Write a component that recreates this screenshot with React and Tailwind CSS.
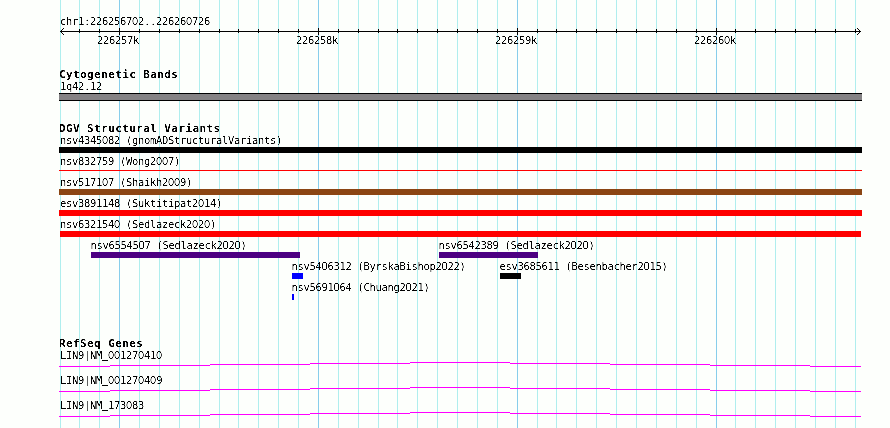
import React from "react";

const minorLines = [
  60, 79, 99, 139, 159, 179, 199, 219, 238, 258, 278, 298, 338, 358, 378, 397,
  417, 437, 457, 477, 497, 537, 556, 576, 596, 616, 636, 656, 676, 696, 735,
  755, 775, 795, 815, 835, 855,
];

const majorLines = [119, 318, 517, 716];

const scaleLabels = ["226257k", "226258k", "226259k", "226260k"];

const variants = [
  { name: "nsv4345082 (gnomADStructuralVariants)", color: "bg-black" },
  { name: "nsv832759 (Wong2007)", color: "bg-[#ff0000]", thin: true },
  { name: "nsv517107 (Shaikh2009)", color: "bg-[#8b4513]" },
  { name: "esv3891148 (Suktitipat2014)", color: "bg-[#ff0000]" },
];

const genes = ["LIN9|NM_001270410", "LIN9|NM_001270409", "LIN9|NM_173083"];

const GridLines = () => (
  <svg
    className="absolute inset-0"
    width="890"
    height="428"
    shapeRendering="crispEdges"
  >
    {minorLines.map((x) => (
      <rect key={x} x={x} y="0" width="1" height="428" fill="#afeeee" />
    ))}
    {majorLines.map((x) => (
      <rect key={x} x={x} y="0" width="1" height="428" fill="#87ceeb" />
    ))}
  </svg>
);

const Ruler = () => (
  <svg
    className="block"
    width="890"
    height="9"
    viewBox="0 27 890 9"
    shapeRendering="crispEdges"
  >
    <rect x="60" y="31" width="801" height="1" />
    {minorLines.slice(1).map((x) => (
      <rect key={x} x={x} y="29" width="1" height="4" />
    ))}
    {majorLines.map((x) => (
      <rect key={x} x={x} y="28" width="1" height="7" />
    ))}
    {[1, 2, 3].map((d) => (
      <g key={d}>
        <rect x={60 + d} y={31 - d} width="1" height="1" />
        <rect x={60 + d} y={31 + d} width="1" height="1" />
        <rect x={860 - d} y={31 - d} width="1" height="1" />
        <rect x={860 - d} y={31 + d} width="1" height="1" />
      </g>
    ))}
  </svg>
);

// turns the antialiased glyphs into hard pixels
const CrispFilter = () => (
  <svg className="absolute" width="0" height="0">
    <filter id="crisp" x="0" y="-20%" width="100%" height="150%">
      <feComponentTransfer>
        <feFuncA type="linear" slope="3" intercept="-1.1" />
      </feComponentTransfer>
    </filter>
  </svg>
);

// the mono font has a dotted zero, so plain zeros come from the sans font
const Label = ({ children }) => (
  <p className="h-[15px] pl-px text-[10.5px] leading-[17px] tracking-[-0.321px] whitespace-pre [filter:url(#crisp)]">
    {children.split(/([0_])/).map((part, i) =>
      part === "0" || part === "_" ? (
        <span
          key={i}
          className="font-['Liberation_Sans',sans-serif] text-[11px] leading-none tracking-[-0.117px]"
        >
          {part}
        </span>
      ) : (
        part
      )
    )}
  </p>
);

const Heading = ({ children }) => (
  <h2 className="h-[13px] text-[11px] leading-[15px] font-bold tracking-[0.4px] whitespace-pre [filter:url(#crisp)]">
    {children}
  </h2>
);

const Feature = ({ name, className, bar }) => (
  <div className={className}>
    <div className="-ml-[0.5px]">
      <Label>{name}</Label>
    </div>
    <div className={`h-1.5 ml-px ${bar}`}></div>
  </div>
);

const Gene = ({ name }) => (
  <div className="h-[25px]">
    <Label>{name}</Label>
    <svg
      className="block"
      width="803"
      height="5"
      viewBox="59 0 803 5"
      shapeRendering="crispEdges"
      fill="#ff00ff"
    >
      <rect x="59" y="4" width="51" height="1" />
      <rect x="110" y="3" width="100" height="1" />
      <rect x="210" y="2" width="100" height="1" />
      <rect x="310" y="1" width="100" height="1" />
      <rect x="410" y="0" width="100" height="1" />
      <rect x="510" y="1" width="100" height="1" />
      <rect x="610" y="2" width="100" height="1" />
      <rect x="710" y="3" width="100" height="1" />
      <rect x="810" y="4" width="51" height="1" />
    </svg>
  </div>
);

const App = () => {
  return (
    <div className="relative w-[890px] h-[428px] overflow-hidden bg-[#fdfffc] text-black font-['DejaVu_Sans_Mono',monospace]">
      <CrispFilter />
      <GridLines />
      <div className="relative flex flex-col">
        <div className="h-[27px] pt-[13px] pl-[59px]">
          <Label>chr1:226256702..226260726</Label>
        </div>
        <Ruler />
        <div className="flex gap-[157px] h-[31px] pl-[96px] -mt-[4px]">
          {scaleLabels.map((label) => (
            <div key={label} className="w-[42px]">
              <Label>{label}</Label>
            </div>
          ))}
        </div>

        <div className="w-[803px] ml-[59px] pt-[4px]">
          <Heading>Cytogenetic Bands</Heading>
          <div className="-mt-[2px]">
            <Label>1q42.12</Label>
          </div>
          <div className="h-2 border-y border-black bg-[#848284]"></div>
        </div>

        <div className="w-[803px] ml-[59px] pt-[20px]">
          <Heading>DGV Structural Variants</Heading>
          <div className="-mt-[2px]">
            {variants.map((v) => (
              <div key={v.name} className="h-[21px]">
                <Label>{v.name}</Label>
                <div
                  className={`${v.thin ? "h-px mt-[2px]" : "h-1.5"} ${v.color}`}
                ></div>
              </div>
            ))}
            <div className="h-[21px]">
              <Label>nsv6321540 (Sedlazeck2020)</Label>
              <div className="h-1.5 mx-px bg-[#ff0000]"></div>
            </div>
            <div className="flex h-[21px] pl-[31px]">
              <Feature
                name="nsv6554507 (Sedlazeck2020)"
                className="w-[348px]"
                bar="w-[209px] bg-[#4b0082]"
              />
              <Feature
                name="nsv6542389 (Sedlazeck2020)"
                bar="w-[99px] bg-[#4b0082]"
              />
            </div>
            <div className="flex h-[21px] pl-[232px]">
              <Feature
                name="nsv5406312 (ByrskaBishop2022)"
                className="w-[208px]"
                bar="w-[11px] bg-[#0000ff]"
              />
              <Feature
                name="esv3685611 (Besenbacher2015)"
                bar="w-[21px] bg-black"
              />
            </div>
            <div className="flex h-[21px] pl-[232px]">
              <Feature
                name="nsv5691064 (Chuang2021)"
                bar="w-[2px] bg-[#0000ff]"
              />
            </div>
          </div>
        </div>

        <div className="w-[803px] ml-[59px] pt-[36px]">
          <Heading>RefSeq Genes</Heading>
          <div className="-mt-[2px]">
            {genes.map((gene) => (
              <Gene key={gene} name={gene} />
            ))}
          </div>
        </div>
      </div>
    </div>
  );
};

export default App;
